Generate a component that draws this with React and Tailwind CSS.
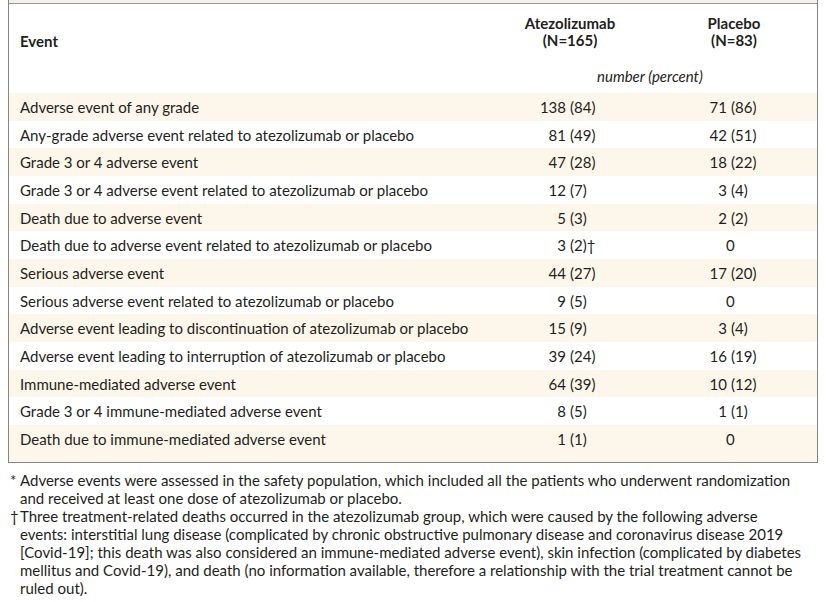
import React from 'react'

const rows = [
  ['Adverse event of any grade', ['138', '(84)'], ['71', '(86)']],
  ['Any-grade adverse event related to atezolizumab or placebo', ['81', '(49)'], ['42', '(51)']],
  ['Grade 3 or 4 adverse event', ['47', '(28)'], ['18', '(22)']],
  ['Grade 3 or 4 adverse event related to atezolizumab or placebo', ['12', '(7)'], ['3', '(4)']],
  ['Death due to adverse event', ['5', '(3)'], ['2', '(2)']],
  ['Death due to adverse event related to atezolizumab or placebo', ['3', '(2)†'], null],
  ['Serious adverse event', ['44', '(27)'], ['17', '(20)']],
  ['Serious adverse event related to atezolizumab or placebo', ['9', '(5)'], null],
  ['Adverse event leading to discontinuation of atezolizumab or placebo', ['15', '(9)'], ['3', '(4)']],
  ['Adverse event leading to interruption of atezolizumab or placebo', ['39', '(24)'], ['16', '(19)']],
  ['Immune-mediated adverse event', ['64', '(39)'], ['10', '(12)']],
  ['Grade 3 or 4 immune-mediated adverse event', ['8', '(5)'], ['1', '(1)']],
  ['Death due to immune-mediated adverse event', ['1', '(1)'], null],
]

// number right-aligned up to the split, percent left-aligned after it
const Value = ({ v, left }) => {
  if (!v) {
    return (
      <div className="w-[140px] flex">
        <span style={{ width: left }} className="shrink-0" />
        <span className="-ml-[1px]">0</span>
      </div>
    )
  }
  return (
    <div className="w-[140px] flex">
      <span style={{ width: left }} className="shrink-0 text-right">{v[0]}</span>
      <span className="pl-[4px]">{v[1]}</span>
    </div>
  )
}

export default function App() {
  return (
    <div className="w-[827px] h-[602px] bg-white text-[#231f20] text-[15px] font-['Lato','Liberation_Sans',sans-serif] overflow-hidden">
      <div className="ml-[8px] w-[810px] border-x border-b border-[#858585]">
        <div className="h-[4px] bg-[#f3f0e9] border-b border-[#9a9a9a]" />

        {/* header */}
        <div className="h-[89px] flex relative">
          <div className="w-[491px] pl-[11px] pt-[26px] font-bold">Event</div>
          <div className="w-[140px] pt-[11px] text-center font-bold leading-[17px]">
            Atezolizumab<br />(N=165)
          </div>
          <div className="w-[24px]" />
          <div className="w-[140px] pt-[11px] text-center font-bold leading-[17px]">
            Placebo<br />(N=83)
          </div>
          <div className="absolute left-[588px] top-[61px] italic">number (percent)</div>
        </div>

        {rows.map((r, i) => (
          <div
            key={i}
            className={`flex items-start pt-[3px] ${i % 2 === 0 ? 'bg-[#fdf6ea]' : 'bg-white'} ${i === rows.length - 1 ? 'h-[37px]' : 'h-[27.67px]'}`}
          >
            <div className="w-[491px] pl-[11px] whitespace-nowrap">{r[0]}</div>
            <Value v={r[1]} left={66} />
            <div className="w-[24px]" />
            <Value v={r[2]} left={63} />
          </div>
        ))}
      </div>

      {/* footnotes */}
      <div className="pt-[8px] pl-[10px] leading-[18px] whitespace-nowrap">
        <div className="flex">
          <span className="w-[10px] shrink-0">*</span>
          <span>
            Adverse events were assessed in the safety population, which included all the patients who underwent randomization<br />
            and received at least one dose of atezolizumab or placebo.
          </span>
        </div>
        <div className="flex">
          <span className="w-[10px] shrink-0">†</span>
          <span>
            Three treatment-related deaths occurred in the atezolizumab group, which were caused by the following adverse<br />
            events: interstitial lung disease (complicated by chronic obstructive pulmonary disease and coronavirus disease 2019<br />
            [Covid-19]; this death was also considered an immune-mediated adverse event), skin infection (complicated by diabetes<br />
            mellitus and Covid-19), and death (no information available, therefore a relationship with the trial treatment cannot be<br />
            ruled out).
          </span>
        </div>
      </div>
    </div>
  )
}
